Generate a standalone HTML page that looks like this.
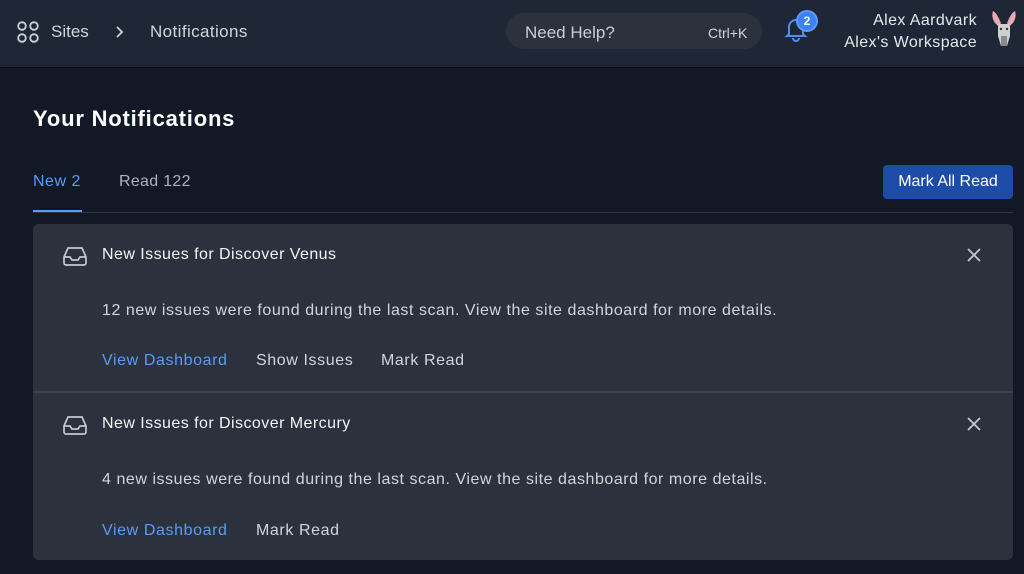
<!DOCTYPE html>
<html><head><meta charset="utf-8"><style>
*{margin:0;padding:0;box-sizing:border-box}
body{width:1024px;height:574px;background:#121826;font-family:"Liberation Sans",sans-serif;overflow:hidden;position:relative;color:#e5e7eb}
.hdr{position:absolute;left:0;top:0;width:1024px;height:68px;background:#1f2736;border-bottom:1px solid #0b0f18}
.abs{position:absolute;white-space:nowrap}
.card{position:absolute;left:33px;width:980px;background:#2c323d}
.t{font-size:16px;color:#f3f4f6;letter-spacing:0.45px}
.d{font-size:16px;color:#d1d5db;letter-spacing:0.55px}
.l{font-size:16px;color:#d1d5db;letter-spacing:0.6px}
.b{color:#5b9af5}
</style></head><body>
<div class="hdr">
<svg class="abs" style="left:17px;top:21px" width="22" height="22" viewBox="0 0 22 22" fill="none" stroke="#cbd0d8" stroke-width="1.8"><circle cx="5" cy="5" r="3.8"/><circle cx="17" cy="5" r="3.8"/><circle cx="5" cy="17" r="3.8"/><circle cx="17" cy="17" r="3.8"/></svg>
<div class="abs" style="left:51px;top:22px;font-size:17px;color:#d1d5db">Sites</div>
<svg class="abs" style="left:114px;top:25px" width="12" height="14" viewBox="0 0 12 14" fill="none" stroke="#d1d5db" stroke-width="1.8"><path d="M3 2l5 5-5 5"/></svg>
<div class="abs" style="left:150px;top:22px;font-size:17px;color:#d1d5db;letter-spacing:0.4px">Notifications</div>
<div class="abs" style="left:506px;top:13px;width:256px;height:36px;border-radius:18px;background:#2c323d"></div>
<div class="abs" style="left:525px;top:23px;font-size:17px;color:#c9cdd4">Need Help?</div>
<div class="abs" style="left:708px;top:25px;font-size:14px;color:#d1d5db">Ctrl+K</div>
<svg class="abs" style="left:784px;top:14px" width="24" height="28" viewBox="0 0 24 28" fill="none" stroke="#4f8ef0" stroke-width="2"><path d="M5 20V13a7 7 0 0 1 14 0v7l2 2H3z"/><path d="M9 24a3 3 0 0 0 6 0"/></svg>
<div class="abs" style="left:796px;top:10px;width:22px;height:22px;border-radius:50%;background:#3b82f6;border:2px solid #5f9af8;color:#fff;font-size:12px;font-weight:bold;text-align:center;line-height:18px">2</div>
<div class="abs" style="right:47px;top:12px;font-size:16px;color:#e5e7eb;text-align:right;letter-spacing:0.4px">Alex Aardvark</div>
<div class="abs" style="right:47px;top:34px;font-size:16px;color:#e5e7eb;text-align:right;letter-spacing:0.4px">Alex's Workspace</div>
<svg class="abs" style="left:988px;top:8px" width="32" height="42" viewBox="0 0 32 42"><path d="M5 3c-2 6 1 13 6 15l2-3C11 11 9 5 5 3z" fill="#e8a9b5"/><path d="M27 3c2 6-1 13-6 15l-2-3c2-4 4-10 8-12z" fill="#e8a9b5"/><path d="M10 16h12v12l-3 10h-6l-3-10z" fill="#cfcfcf"/><path d="M13 28h6v10h-6z" fill="#8a8a8a"/><circle cx="13" cy="21" r="1.2" fill="#333"/><circle cx="19" cy="21" r="1.2" fill="#333"/></svg>
</div>
<div class="abs" style="left:33px;top:106px;font-size:22px;font-weight:bold;color:#fff;letter-spacing:0.8px">Your Notifications</div>
<div class="abs" style="left:33px;top:173px;font-size:16px;color:#5b9af5;letter-spacing:0.5px">New 2</div>
<div class="abs" style="left:33px;top:210px;width:49px;height:3px;background:#5b9af5"></div>
<div class="abs" style="left:119px;top:173px;font-size:16px;color:#aeb3bb;letter-spacing:0.3px">Read 122</div>
<div class="abs" style="left:33px;top:212px;width:980px;height:1px;background:#2f3644"></div>
<div class="abs" style="left:883px;top:165px;width:130px;height:34px;border-radius:4px;background:#1d4ba8;color:#fff;font-size:16px;text-align:center;line-height:34px">Mark All Read</div>

<div class="card" style="top:224px;height:168px;border-radius:5px 5px 0 0"></div>
<div class="abs" style="left:33px;top:391px;width:980px;height:2px;background:#3a424f"></div>
<div class="card" style="top:393px;height:167px;border-radius:0 0 5px 5px"></div>

<svg class="abs" style="left:62px;top:245px" width="26" height="22" viewBox="0 0 26 22" fill="none" stroke="#c4c8cf" stroke-width="1.7"><path d="M2 12l4-9h14l4 9v6a2 2 0 0 1-2 2H4a2 2 0 0 1-2-2z"/><path d="M2 12h6l2 3h6l2-3h6"/></svg>
<div class="abs t" style="left:102px;top:246px">New Issues for Discover Venus</div>
<svg class="abs" style="left:966px;top:247px" width="16" height="16" viewBox="0 0 16 16" stroke="#c4c8cf" stroke-width="1.8"><path d="M2 2l12 12M14 2L2 14"/></svg>
<div class="abs d" style="left:102px;top:302px">12 new issues were found during the last scan. View the site dashboard for more details.</div>
<div class="abs l b" style="left:102px;top:352px">View Dashboard</div>
<div class="abs l" style="left:256px;top:352px">Show Issues</div>
<div class="abs l" style="left:381px;top:352px">Mark Read</div>

<svg class="abs" style="left:62px;top:414px" width="26" height="22" viewBox="0 0 26 22" fill="none" stroke="#c4c8cf" stroke-width="1.7"><path d="M2 12l4-9h14l4 9v6a2 2 0 0 1-2 2H4a2 2 0 0 1-2-2z"/><path d="M2 12h6l2 3h6l2-3h6"/></svg>
<div class="abs t" style="left:102px;top:415px">New Issues for Discover Mercury</div>
<svg class="abs" style="left:966px;top:416px" width="16" height="16" viewBox="0 0 16 16" stroke="#c4c8cf" stroke-width="1.8"><path d="M2 2l12 12M14 2L2 14"/></svg>
<div class="abs d" style="left:102px;top:471px">4 new issues were found during the last scan. View the site dashboard for more details.</div>
<div class="abs l b" style="left:102px;top:522px">View Dashboard</div>
<div class="abs l" style="left:256px;top:522px">Mark Read</div>
</body></html>
